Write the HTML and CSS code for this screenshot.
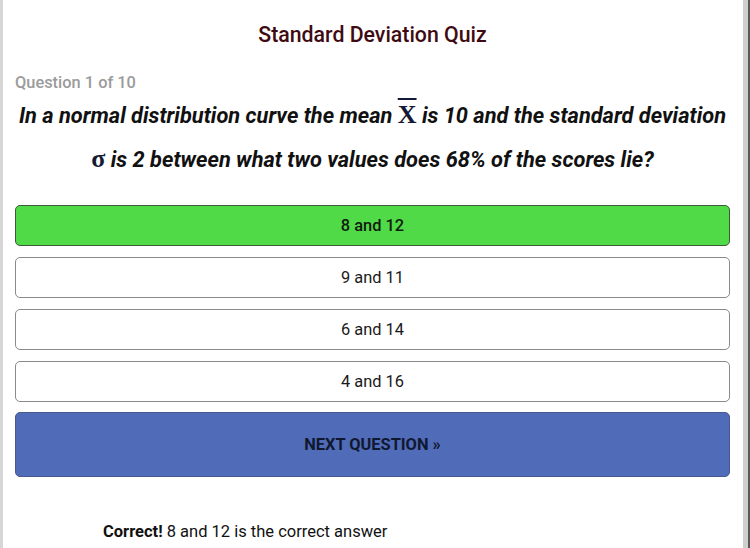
FILE: index.html
```html
<!DOCTYPE html>
<html>
<head>
<meta charset="utf-8">
<link rel="stylesheet" href="styles.css">
</head>
<body>
<div class="frame">
  <div class="edge-left"></div>
  <main class="quiz">
    <h1 class="title">Standard Deviation Quiz</h1>
    <div class="counter">Question 1 of 10</div>
    <p class="question">In a normal distribution curve the mean <span class="sym xbar">X</span> is 10 and the standard deviation<br><span class="sym">σ</span> is 2 between what two values does 68% of the scores lie?</p>
    <div class="options">
      <div class="option correct">8 and 12</div>
      <div class="option">9 and 11</div>
      <div class="option">6 and 14</div>
      <div class="option">4 and 16</div>
    </div>
    <div class="next">NEXT QUESTION »</div>
    <p class="result"><b>Correct!</b> 8 and 12 is the correct answer</p>
  </main>
  <div class="edge-right"></div>
</div>
</body>
</html>
```

FILE: styles.css
```css
html, body {
  margin: 0;
  padding: 0;
  background: #fff;
}
body {
  font-family: Roboto, "Liberation Sans", sans-serif;
  color: #111;
}
.frame {
  display: flex;
  width: 750px;
  height: 548px;
  overflow: hidden;
}
.edge-left {
  width: 3px;
  background: #d6d6d6;
  flex: none;
}
.edge-right {
  width: 5px;
  background: #cfcfcf;
  border-right: 2px solid #5a5a5e;
  flex: none;
}
.quiz {
  flex: 1;
  padding: 23px 13px 0 12px;
}
.title {
  margin: 0;
  text-align: center;
  font-size: 21.3px;
  line-height: 24px;
  font-weight: 500;
  color: #3f0b12;
}
.counter {
  margin-top: 26px;
  font-size: 16.4px;
  line-height: 20px;
  font-weight: 500;
  color: #9b9b9b;
}
.question {
  margin: 0;
  text-align: center;
  font-size: 21.8px;
  line-height: 43px;
  font-weight: 700;
  font-style: italic;
  color: #111;
}
.sym {
  font-family: "Liberation Serif", "DejaVu Serif", serif;
  font-style: normal;
  font-weight: 700;
  font-size: 26px;
  color: #141a33;
}
.xbar {
  text-decoration: overline;
  text-decoration-thickness: 2px;
}
.options {
  margin-top: 24px;
  display: flex;
  flex-direction: column;
  gap: 11px;
}
.option {
  height: 39px;
  border: 1px solid #8a8a8a;
  border-radius: 5px;
  display: flex;
  align-items: center;
  justify-content: center;
  font-size: 16.4px;
  color: #1a1a1a;
  background: #fff;
}
.option.correct {
  background: #50da48;
  border-color: #3b5a37;
  font-weight: 500;
  color: #0e1a0e;
}
.next {
  margin-top: 10px;
  height: 63px;
  border: 1px solid #48598f;
  border-radius: 5px;
  background: #506bb8;
  display: flex;
  align-items: center;
  justify-content: center;
  font-size: 16.4px;
  font-weight: 700;
  color: #101830;
}
.result {
  margin: 45px 0 0 88px;
  font-size: 16.5px;
  line-height: 20px;
  color: #111;
}
.result b {
  font-weight: 700;
}
```
